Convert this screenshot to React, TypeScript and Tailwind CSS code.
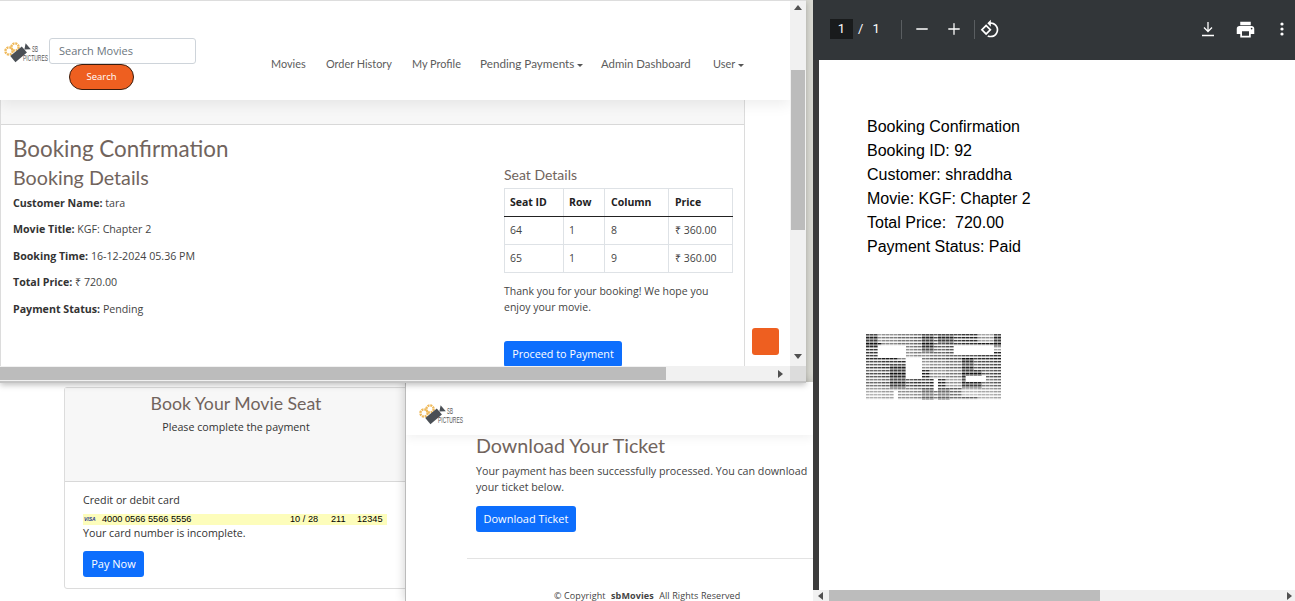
import { Minus, Plus } from "lucide-react";

const heading = "font-['Lato',sans-serif] text-[#71645d]";
const body = "font-['Open_Sans',sans-serif]";

function Logo() {
  return (
    <svg width="46" height="24" viewBox="0 0 46 24" className="shrink-0">
      <circle cx="6" cy="11" r="3.6" fill="none" stroke="#efb95a" strokeWidth="2.4" strokeDasharray="2 0.8" />
      <circle cx="12" cy="7" r="3.6" fill="none" stroke="#efb95a" strokeWidth="2.4" strokeDasharray="2 0.8" />
      <g transform="rotate(-40 16 14)">
        <rect x="8" y="10" width="15" height="8" fill="#4a4f55" />
        <path d="M23 14 L28 10 L28 18 Z" fill="#4a4f55" />
      </g>
      <text x="29" y="12" fontSize="8.5" fill="#555" fontFamily="Liberation Sans" textLength="6" lengthAdjust="spacingAndGlyphs">SB</text>
      <text x="20" y="21" fontSize="8.5" fill="#555" fontFamily="Liberation Sans" textLength="25" lengthAdjust="spacingAndGlyphs">PICTURES</text>
    </svg>
  );
}

function Arrow({ dir }: { dir: "up" | "down" | "left" | "right" }) {
  const d = {
    up: "M0 5 L4 0 L8 5 Z",
    down: "M0 0 L8 0 L4 5 Z",
    left: "M6 0 L6 8 L1 4 Z",
    right: "M1 0 L1 8 L6 4 Z",
  }[dir];
  return (
    <svg width="8" height="8" viewBox="0 0 8 8">
      <path d={d} fill="#505050" />
    </svg>
  );
}

function Caret() {
  return <span className="ml-[3px] inline-block align-middle border-x-[3px] border-t-[3px] border-x-transparent border-t-[#555]" />;
}

const holes = [
  [27, 23, 54, 35],
  [54, 35, 69, 58],
  [102, 23, 140, 33],
  [80, 58, 85, 68],
  [40, 68, 46, 78],
  [115, 55, 135, 60],
];
const darks = [
  [38, 43, 54, 67],
  [108, 35, 123, 47],
  [110, 47, 130, 67],
  [15, 13, 25, 25],
  [70, 13, 80, 30],
  [87, 13, 100, 22],
  [70, 67, 80, 78],
  [87, 67, 97, 78],
  [140, 13, 150, 25],
];

function inside(list: number[][], x: number, y: number) {
  return list.some(([a, b, c, d]) => x >= a && x < c && y >= b && y < d);
}

function PseudoCode() {
  const cells: { x: number; y: number; o: number; dark: boolean }[] = [];
  for (let row = 0; row < 22; row++) {
    for (let col = 0; col < 34; col++) {
      const x = col * 4;
      const y = row * 3;
      const px = x + 15;
      const py = y + 13;
      if (inside(holes, px, py)) continue;
      const block = (Math.floor(col / 4) * 29 + Math.floor(row / 3) * 13) % 7;
      const n = ((col * 5 + row * 3) % 5) / 5;
      const dark = inside(darks, px, py);
      const o = dark ? 0.7 + n * 0.3 : 0.35 + block * 0.07 + n * 0.15;
      cells.push({ x, y, o: row > 17 ? o * 0.7 : o, dark });
    }
  }
  return (
    <svg width="135" height="66" viewBox="0 0 135 66" className="-ml-px mt-[75px]">
      {cells.map((c) => (
        <g key={`${c.x}-${c.y}`}>
          <rect x={c.x} y={c.y} width="3.6" height="1.4" fill="#000" opacity={c.o} />
          <rect x={c.x} y={c.y + 1.4} width="3.6" height="1.6" fill="#000" opacity={c.dark ? c.o * 0.45 : c.o * 0.08} />
        </g>
      ))}
    </svg>
  );
}

function BrowserWindow() {
  const rows = [
    ["64", "1", "8", "₹ 360.00"],
    ["65", "1", "9", "₹ 360.00"],
  ];
  return (
    <div className="absolute left-0 top-0 z-20 flex h-[383px] w-[806px] flex-col border-b-2 border-t border-b-[#c4c4c4] border-t-[#ddd] bg-white shadow-[0_2px_6px_rgba(0,0,0,0.25)]">
      <div className="flex h-[365px]">
        <div className="relative h-full w-[790px] overflow-hidden">
          <nav className="relative z-10 flex h-[99px] bg-white pl-[3px] shadow-[0_4px_14px_rgba(0,0,0,0.08)]">
            <div className="mt-[39px]">
              <Logo />
            </div>
            <div className="mt-[37px] w-[147px]">
              <div className={`${body} h-[26px] w-[147px] rounded-[3px] border border-[#ced4da] pl-[9px] text-[11px] leading-[24px] text-[#6c757d]`}>
                Search Movies
              </div>
              <div className={`${body} ml-[20px] flex h-[26px] w-[65px] items-center justify-center rounded-full border border-[#3a1c0c] bg-[#ee5f20] text-[9.5px] text-white`}>
                Search
              </div>
            </div>
            <div className="ml-[75px] mt-[56px] flex h-[14px] items-center font-['Lato',sans-serif] text-[10.9px] text-[#5c5c5c]">
              <span className="w-[55px]">Movies</span>
              <span className="w-[86px]">Order History</span>
              <span className="w-[68px]">My Profile</span>
              <span className="w-[121px] text-[11.7px]">Pending Payments<Caret /></span>
              <span className="w-[112px] text-[11.4px]">Admin Dashboard</span>
              <span>User<Caret /></span>
            </div>
          </nav>
          <div className="h-[266px] w-[745px] border-x border-[#dcdcdc]">
            <div className="h-[25px] border-b border-[#d8d8d8] bg-[#f7f7f7]" />
            <div className="flex">
              <div className={`${body} w-[503px] pl-[12px] text-[10.65px] text-[#444]`}>
                <h1 className={`${heading} mt-[10px] text-[22.4px] leading-[28px]`}>Booking Confirmation</h1>
                <h2 className={`${heading} mt-[1px] text-[19.7px] leading-[28px]`}>Booking Details</h2>
                <p className="mt-[3px] leading-[16px]"><b className="text-[#333]">Customer Name:</b> tara</p>
                <p className="mt-[10px] leading-[16px]"><b className="text-[#333]">Movie Title:</b> KGF: Chapter 2</p>
                <p className="mt-[11px] leading-[16px]"><b className="text-[#333]">Booking Time:</b> 16-12-2024 05.36 PM</p>
                <p className="mt-[10px] leading-[16px]"><b className="text-[#333]">Total Price:</b> ₹ 720.00</p>
                <p className="mt-[11px] leading-[16px]"><b className="text-[#333]">Payment Status:</b> Pending</p>
              </div>
              <div className={`${body} w-[229px] text-[10.5px] text-[#444]`}>
                <h3 className={`${heading} mt-[41px] text-[14px] leading-[18px]`}>Seat Details</h3>
                <table className="mt-[4px] w-[229px] table-fixed border-collapse">
                  <thead>
                    <tr className="h-[28px] border-b border-b-[#222] text-left font-bold text-[#222]">
                      <th className="w-[59px] border border-b-[#222] border-[#dee2e6] pl-[5px]">Seat ID</th>
                      <th className="w-[41px] border border-b-[#222] border-[#dee2e6] pl-[5px]">Row</th>
                      <th className="w-[64px] border border-b-[#222] border-[#dee2e6] pl-[6px]">Column</th>
                      <th className="border border-b-[#222] border-[#dee2e6] pl-[6px]">Price</th>
                    </tr>
                  </thead>
                  <tbody>
                    {rows.map((r) => (
                      <tr key={r[0]} className="h-[28px]">
                        <td className="border border-[#dee2e6] pl-[5px]">{r[0]}</td>
                        <td className="border border-[#dee2e6] pl-[5px]">{r[1]}</td>
                        <td className="border border-[#dee2e6] pl-[6px]">{r[2]}</td>
                        <td className="border border-[#dee2e6] pl-[6px]">{r[3]}</td>
                      </tr>
                    ))}
                  </tbody>
                </table>
                <p className="mt-[10px] leading-[16px]">Thank you for your booking! We hope you enjoy your movie.</p>
                <div className="mt-[26px] flex h-[26px] w-[118px] items-center justify-center rounded-[3px] bg-[#0d6efd] text-[10.8px] text-white">
                  Proceed to Payment
                </div>
              </div>
            </div>
          </div>
          <div className="absolute left-[752px] top-[327px] h-[27px] w-[27px] rounded-[3px] bg-[#ee5f20]" />
        </div>
        <div className="flex w-[16px] flex-col items-center bg-[#f1f1f1]">
          <div className="flex h-[16px] items-center justify-center"><Arrow dir="up" /></div>
          <div className="mt-[53px] h-[160px] w-[14px] bg-[#bcbcbc]" />
          <div className="flex-1" />
          <div className="flex h-[16px] items-center justify-center"><Arrow dir="down" /></div>
        </div>
      </div>
      <div className="flex h-[15px] bg-[#f1f1f1]">
        <div className="mt-[1px] h-[13px] w-[666px] bg-[#bcbcbc]" />
        <div className="flex w-[124px] items-center justify-end pr-[5px]"><Arrow dir="right" /></div>
        <div className="w-[16px] bg-[#dcdcdc]" />
      </div>
    </div>
  );
}

function PaymentCard() {
  return (
    <div className={`${body} absolute left-[64px] top-[387px] z-0 h-[202px] w-[360px] rounded-[3px] border border-[#dcdcdc] text-[10.7px] text-[#333]`}>
      <div className="h-[94px] w-[342px] border-b border-[#d8d8d8] bg-[#f7f7f7] text-center">
        <h2 className={`${heading} pt-[4px] text-[17.7px] leading-[24px]`}>Book Your Movie Seat</h2>
        <p className="mt-[3px] leading-[16px]">Please complete the payment</p>
      </div>
      <div className="pl-[18px]">
        <p className="mt-[10px] leading-[16px]">Credit or debit card</p>
        <div className="mt-[6px] flex h-[11px] w-[304px] items-center bg-[#fdfdbb] font-['Liberation_Sans',sans-serif] text-[9.2px] text-black">
          <span className="ml-[1px] w-[18px] text-[5px] font-bold italic text-[#27348b]">VISA</span>
          <span className="w-[188px]">4000 0566 5566 5556</span>
          <span className="w-[41px]">10 / 28</span>
          <span className="w-[26px]">211</span>
          <span>12345</span>
        </div>
        <p className="leading-[16px]">Your card number is incomplete.</p>
        <div className="mt-[10px] flex h-[26px] w-[61px] items-center justify-center rounded-[3px] bg-[#0d6efd] text-[11px] text-white">
          Pay Now
        </div>
      </div>
    </div>
  );
}

function TicketWindow() {
  return (
    <div className={`${body} absolute left-[405px] top-[382px] z-10 h-[219px] w-[408px] overflow-hidden border-l border-[#bbb] bg-white text-[10.5px] text-[#444] shadow-[0_0_10px_rgba(0,0,0,0.2)]`}>
      <div className="h-[53px] pl-[12px] pt-[20px] shadow-[0_3px_10px_rgba(0,0,0,0.06)]">
        <Logo />
      </div>
      <div className="pl-[70px]">
        <h2 className={`${heading} mt-[1px] text-[19.7px] leading-[20px]`}>Download Your Ticket</h2>
        <p className="mt-[7px] w-[336px] text-[10.7px] leading-[16px]">Your payment has been successfully processed. You can download your ticket below.</p>
        <div className="mt-[11px] flex h-[26px] w-[100px] items-center justify-center rounded-[3px] bg-[#0d6efd] text-[11px] text-white">
          Download Ticket
        </div>
      </div>
      <div className="ml-[61px] mt-[26px] border-t border-[#e3e3e3]" />
      <p className="mt-[30px] pl-[148px] text-[9px] leading-[14px] tracking-[0.1px]">
        © Copyright <b className="ml-[3px] mr-[3px]">sbMovies</b> All Rights Reserved
      </p>
    </div>
  );
}

function PdfWindow() {
  return (
    <div className="absolute left-[813px] top-0 z-30 flex h-[601px] w-[482px] flex-col bg-white">
      <div className="flex h-[60px] shrink-0 items-center bg-[#323639] pb-[2px] pl-[17px] text-white font-['Roboto',sans-serif] text-[13px]">
        <span className="flex h-[20px] w-[23px] items-center justify-center bg-[#191b1c]">1</span>
        <span className="ml-[5px]">/</span>
        <span className="ml-[9px]">1</span>
        <span className="ml-[21px] h-[19px] w-px bg-[#5a5e61]" />
        <Minus size={18} strokeWidth={1.7} className="ml-[11px]" />
        <Plus size={18} strokeWidth={1.7} className="ml-[14px]" />
        <span className="ml-[11px] h-[19px] w-px bg-[#5a5e61]" />
        <svg width="20" height="20" viewBox="0 0 24 24" fill="#fff" className="ml-[5px]">
          <path d="M7.34 6.41L.86 12.9l6.49 6.48 6.49-6.48-6.5-6.49zM3.69 12.9l3.66-3.66L11 12.9l-3.66 3.66-3.65-3.66zm15.67-6.26C17.61 4.88 15.3 4 13 4V.76L8.76 5 13 9.24V6c1.79 0 3.58.68 4.95 2.05 2.73 2.73 2.73 7.17 0 9.9C16.58 19.32 14.79 20 13 20c-.97 0-1.94-.21-2.84-.61l-1.49 1.49C10.02 21.62 11.51 22 13 22c2.3 0 4.61-.88 6.36-2.64 3.52-3.51 3.52-9.21 0-12.72z" />
        </svg>
        <div className="flex-1" />
        <svg width="14" height="16" viewBox="0 0 14 16" fill="none" stroke="#fff" strokeWidth="1.3" className="mr-[20px]">
          <path d="M7 1 V10 M3 6.5 L7 10.5 L11 6.5 M1 14.5 H13" />
        </svg>
        <svg width="21" height="21" viewBox="0 0 24 24" fill="#fff" className="mr-[24px]">
          <path d="M19 8H5c-1.66 0-3 1.34-3 3v6h4v4h12v-4h4v-6c0-1.66-1.34-3-3-3zm-3 11H8v-5h8v5zm3-7c-.55 0-1-.45-1-1s.45-1 1-1 1 .45 1 1-.45 1-1 1zm-1-9H6v4h12V3z" />
        </svg>
        <svg width="4" height="14" viewBox="0 0 4 14" fill="#fff" className="mr-[11px]">
          <circle cx="2" cy="2" r="1.6" />
          <circle cx="2" cy="7" r="1.6" />
          <circle cx="2" cy="12" r="1.6" />
        </svg>
      </div>
      <div className="flex flex-1">
        <div className="w-[6px] bg-[#3c3c3c]" />
        <div className="flex-1 pl-[48px] pt-[55px] font-['Liberation_Sans',sans-serif] text-[16px] leading-[24px] text-black">
          <p>Booking Confirmation</p>
          <p>Booking ID: 92</p>
          <p>Customer: shraddha</p>
          <p>Movie: KGF: Chapter 2</p>
          <p>Total Price: &nbsp;720.00</p>
          <p>Payment Status: Paid</p>
          <PseudoCode />
        </div>
      </div>
      <div className="flex h-[11px] shrink-0 items-center bg-[#f1f1f1]">
        <div className="flex w-[16px] justify-end pr-[4px]"><Arrow dir="left" /></div>
        <div className="h-[11px] w-[271px] bg-[#bcbcbc]" />
        <div className="flex flex-1 justify-end pr-[1px]"><Arrow dir="right" /></div>
      </div>
    </div>
  );
}

export default function App() {
  return (
    <div className="relative h-[601px] w-[1295px] overflow-hidden bg-white">
      <div className="absolute left-[806px] top-0 h-[382px] w-[7px] bg-[#d9d9d2]" />
      <BrowserWindow />
      <PaymentCard />
      <TicketWindow />
      <PdfWindow />
    </div>
  );
}
